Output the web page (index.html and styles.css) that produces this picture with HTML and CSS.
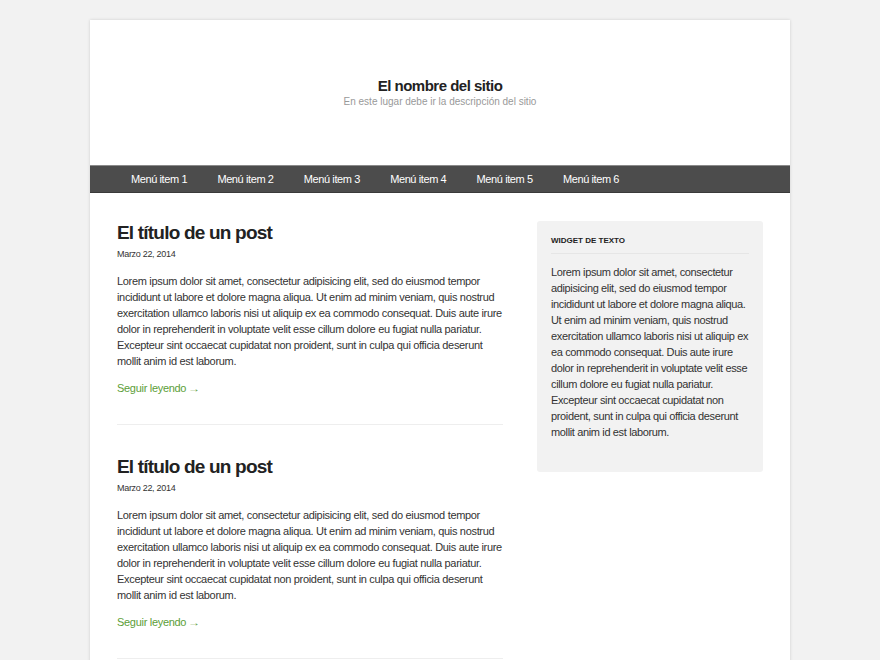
FILE: index.html
```html
<!DOCTYPE html>
<html lang="es">
<head>
<meta charset="utf-8">
<title>El nombre del sitio</title>
<link rel="stylesheet" href="styles.css">
</head>
<body>
<div class="page">
  <header class="site-header">
    <h1 class="site-title">El nombre del sitio</h1>
    <p class="site-desc">En este lugar debe ir la descripción del sitio</p>
  </header>
  <nav class="nav">
    <ul class="menu">
      <li><a href="#">Menú item 1</a></li>
      <li><a href="#">Menú item 2</a></li>
      <li><a href="#">Menú item 3</a></li>
      <li><a href="#">Menú item 4</a></li>
      <li><a href="#">Menú item 5</a></li>
      <li><a href="#">Menú item 6</a></li>
    </ul>
  </nav>
  <div class="content">
    <main class="posts">
      <article class="post">
        <h2 class="post-title">El título de un post</h2>
        <div class="post-date">Marzo 22, 2014</div>
        <p class="post-text">Lorem ipsum dolor sit amet, consectetur adipisicing elit, sed do eiusmod tempor incididunt ut labore et dolore magna aliqua. Ut enim ad minim veniam, quis nostrud exercitation ullamco laboris nisi ut aliquip ex ea commodo consequat. Duis aute irure dolor in reprehenderit in voluptate velit esse cillum dolore eu fugiat nulla pariatur. Excepteur sint occaecat cupidatat non proident, sunt in culpa qui officia deserunt mollit anim id est laborum.</p>
        <a class="more" href="#">Seguir leyendo <span class="arrow">→</span></a>
      </article>
      <article class="post">
        <h2 class="post-title">El título de un post</h2>
        <div class="post-date">Marzo 22, 2014</div>
        <p class="post-text">Lorem ipsum dolor sit amet, consectetur adipisicing elit, sed do eiusmod tempor incididunt ut labore et dolore magna aliqua. Ut enim ad minim veniam, quis nostrud exercitation ullamco laboris nisi ut aliquip ex ea commodo consequat. Duis aute irure dolor in reprehenderit in voluptate velit esse cillum dolore eu fugiat nulla pariatur. Excepteur sint occaecat cupidatat non proident, sunt in culpa qui officia deserunt mollit anim id est laborum.</p>
        <a class="more" href="#">Seguir leyendo <span class="arrow">→</span></a>
      </article>
    </main>
    <aside class="sidebar">
      <section class="widget">
        <h3 class="widget-title">Widget de texto</h3>
        <p class="widget-text">Lorem ipsum dolor sit amet, consectetur adipisicing elit, sed do eiusmod tempor incididunt ut labore et dolore magna aliqua. Ut enim ad minim veniam, quis nostrud exercitation ullamco laboris nisi ut aliquip ex ea commodo consequat. Duis aute irure dolor in reprehenderit in voluptate velit esse cillum dolore eu fugiat nulla pariatur. Excepteur sint occaecat cupidatat non proident, sunt in culpa qui officia deserunt mollit anim id est laborum.</p>
      </section>
    </aside>
  </div>
</div>
</body>
</html>
```

FILE: styles.css
```css
* { box-sizing: border-box; }
html, body { margin: 0; padding: 0; }
body {
  background: #f2f2f2;
  font-family: "Liberation Sans", Arial, sans-serif;
  color: #333;
  padding-top: 20px;
}
.page {
  width: 700px;
  margin: 0 auto;
  background: #fff;
  box-shadow: 0 0 3px rgba(0,0,0,0.15);
  min-height: 700px;
}
.site-header {
  height: 145px;
  padding-top: 57px;
  text-align: center;
}
.site-title {
  margin: 0;
  font-size: 15px;
  line-height: 18px;
  font-weight: bold;
  letter-spacing: -0.5px;
  color: #222;
}
.site-desc {
  margin: 0;
  font-size: 10px;
  line-height: 13px;
  color: #999;
}
.nav {
  background: #4c4c4c;
  border-top: 1px solid #8a8a8a;
  border-bottom: 1px solid #3a3a3a;
  height: 28px;
}
.menu {
  list-style: none;
  margin: 0;
  padding: 0 0 0 41px;
  display: flex;
}
.menu li { width: 86.4px; }
.menu a {
  display: block;
  white-space: nowrap;
  line-height: 26px;
  font-size: 11px;
  letter-spacing: -0.4px;
  color: #fff;
  text-decoration: none;
}
.content {
  display: flex;
  gap: 34px;
  padding: 28px 27px 0;
}
.posts { width: 386px; }
.post {
  border-bottom: 1px solid #eee;
  padding-bottom: 27px;
  margin-bottom: 30px;
}
.post-title {
  margin: 0;
  font-size: 19px;
  line-height: 24px;
  font-weight: bold;
  letter-spacing: -0.8px;
  color: #222;
}
.post-date {
  margin-top: 2px;
  font-size: 9px;
  line-height: 14px;
  letter-spacing: -0.3px;
  color: #333;
}
.post-text {
  font-size: 11px;
  line-height: 16px;
  letter-spacing: -0.32px;
  margin: 12px 0 11px;
  color: #333;
}
.more {
  display: block;
  font-size: 11px;
  line-height: 16px;
  letter-spacing: -0.3px;
  color: #5c9e38;
  text-decoration: none;
}
.arrow {
  display: inline-block;
  margin-left: -1px;
  transform: scaleX(1.2);
  transform-origin: left center;
  font-size: 10px;
}
.sidebar { width: 226px; }
.widget {
  background: #f2f2f2;
  border-radius: 3px;
  padding: 14px 14px 32px;
}
.widget-title {
  margin: 0 0 10px;
  font-size: 8px;
  line-height: 12px;
  font-weight: bold;
  text-transform: uppercase;
  color: #222;
  padding-bottom: 6px;
  border-bottom: 1px solid #e6e6e6;
}
.widget-text {
  margin: 0;
  font-size: 11px;
  line-height: 16px;
  letter-spacing: -0.36px;
  color: #333;
}
```
